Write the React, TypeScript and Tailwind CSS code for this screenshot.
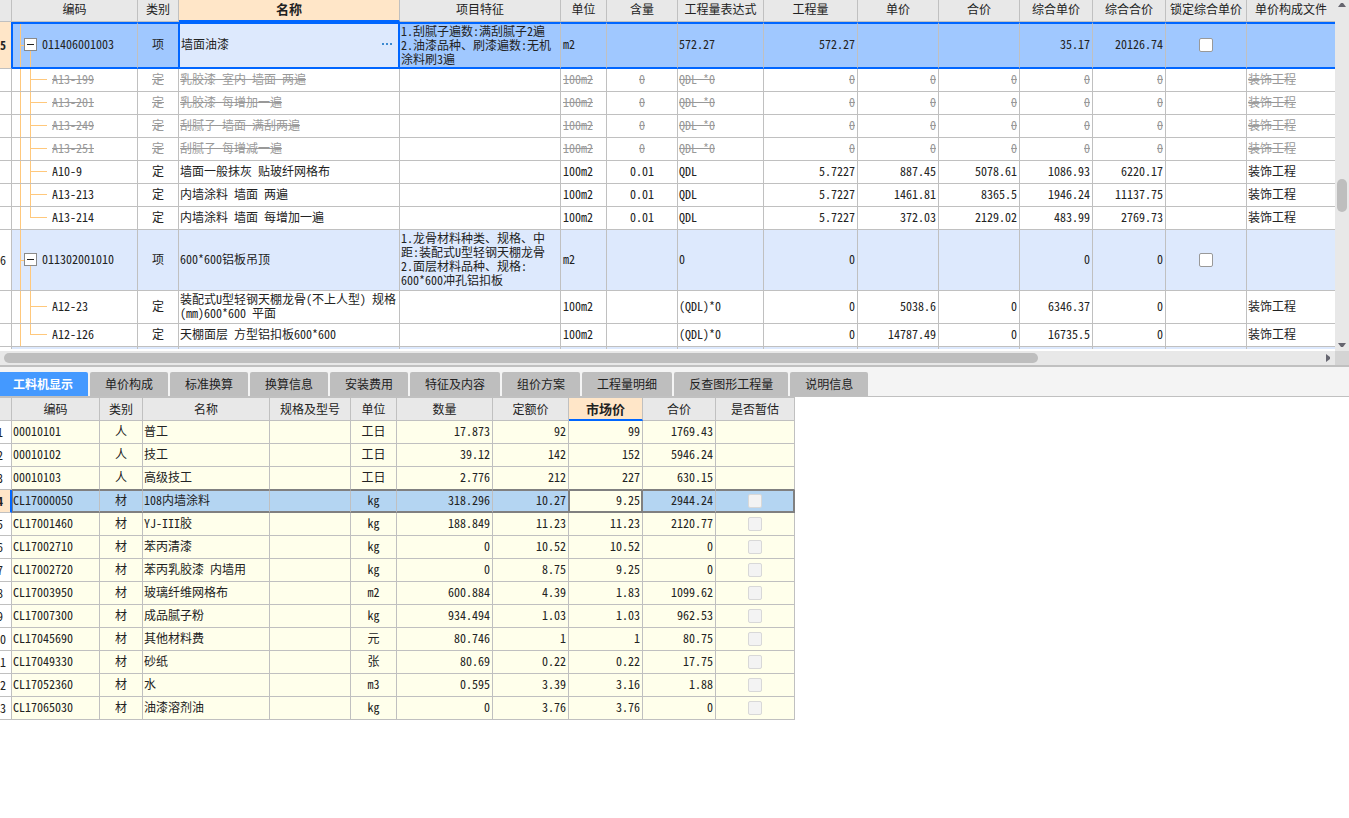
import clsx from "clsx";

type BillRow = {
    no?: string;
    code: string;
    kind: "项" | "定";
    name: string;
    feature?: string;
    unit: string;
    content?: string;
    expr: string;
    qty: string;
    price?: string;
    total?: string;
    fullPrice: string;
    fullTotal: string;
    file?: string;
    height: string;
    selected?: boolean;
    voided?: boolean;
    last?: boolean;
};

const voidedRow = (code: string, name: string): BillRow => ({
    code,
    kind: "定",
    name,
    unit: "100m2",
    content: "0",
    expr: "QDL *0",
    qty: "0",
    price: "0",
    total: "0",
    fullPrice: "0",
    fullTotal: "0",
    file: "装饰工程",
    height: "h-[23px]",
    voided: true,
});

const billRows: BillRow[] = [
    {
        no: "5",
        code: "011406001003",
        kind: "项",
        name: "墙面油漆",
        feature: "1.刮腻子遍数:满刮腻子2遍\n2.油漆品种、刷漆遍数:无机\n涂料刷3遍",
        unit: "m2",
        expr: "572.27",
        qty: "572.27",
        fullPrice: "35.17",
        fullTotal: "20126.74",
        height: "h-[47px]",
        selected: true,
    },
    voidedRow("A13-199", "乳胶漆 室内 墙面 两遍"),
    voidedRow("A13-201", "乳胶漆 每增加一遍"),
    voidedRow("A13-249", "刮腻子 墙面 满刮两遍"),
    voidedRow("A13-251", "刮腻子 每增减一遍"),
    {
        code: "A10-9",
        kind: "定",
        name: "墙面一般抹灰 贴玻纤网格布",
        unit: "100m2",
        content: "0.01",
        expr: "QDL",
        qty: "5.7227",
        price: "887.45",
        total: "5078.61",
        fullPrice: "1086.93",
        fullTotal: "6220.17",
        file: "装饰工程",
        height: "h-[23px]",
    },
    {
        code: "A13-213",
        kind: "定",
        name: "内墙涂料 墙面 两遍",
        unit: "100m2",
        content: "0.01",
        expr: "QDL",
        qty: "5.7227",
        price: "1461.81",
        total: "8365.5",
        fullPrice: "1946.24",
        fullTotal: "11137.75",
        file: "装饰工程",
        height: "h-[23px]",
    },
    {
        code: "A13-214",
        kind: "定",
        name: "内墙涂料 墙面 每增加一遍",
        unit: "100m2",
        content: "0.01",
        expr: "QDL",
        qty: "5.7227",
        price: "372.03",
        total: "2129.02",
        fullPrice: "483.99",
        fullTotal: "2769.73",
        file: "装饰工程",
        height: "h-[23px]",
        last: true,
    },
    {
        no: "6",
        code: "011302001010",
        kind: "项",
        name: "600*600铝板吊顶",
        feature: "1.龙骨材料种类、规格、中\n距:装配式U型轻钢天棚龙骨\n2.面层材料品种、规格:\n600*600冲孔铝扣板",
        unit: "m2",
        expr: "0",
        qty: "0",
        fullPrice: "0",
        fullTotal: "0",
        height: "h-[61px]",
    },
    {
        code: "A12-23",
        kind: "定",
        name: "装配式U型轻钢天棚龙骨(不上人型) 规格\n(mm)600*600 平面",
        unit: "100m2",
        expr: "(QDL)*0",
        qty: "0",
        price: "5038.6",
        total: "0",
        fullPrice: "6346.37",
        fullTotal: "0",
        file: "装饰工程",
        height: "h-[33px]",
    },
    {
        code: "A12-126",
        kind: "定",
        name: "天棚面层 方型铝扣板600*600",
        unit: "100m2",
        expr: "(QDL)*0",
        qty: "0",
        price: "14787.49",
        total: "0",
        fullPrice: "16735.5",
        fullTotal: "0",
        file: "装饰工程",
        height: "h-[23px]",
        last: true,
    },
];

const billHeads = [
    "编码",
    "类别",
    "名称",
    "项目特征",
    "单位",
    "含量",
    "工程量表达式",
    "工程量",
    "单价",
    "合价",
    "综合单价",
    "综合合价",
    "锁定综合单价",
    "单价构成文件",
];

const tabs = [
    "工料机显示",
    "单价构成",
    "标准换算",
    "换算信息",
    "安装费用",
    "特征及内容",
    "组价方案",
    "工程量明细",
    "反查图形工程量",
    "说明信息",
];

const resourceHeads = ["编码", "类别", "名称", "规格及型号", "单位", "数量", "定额价", "市场价", "合价", "是否暂估"];

// code, kind, name, unit, quantity, quota price, market price, total
const resources = [
    ["00010101", "人", "普工", "工日", "17.873", "92", "99", "1769.43"],
    ["00010102", "人", "技工", "工日", "39.12", "142", "152", "5946.24"],
    ["00010103", "人", "高级技工", "工日", "2.776", "212", "227", "630.15"],
    ["CL17000050", "材", "108内墙涂料", "kg", "318.296", "10.27", "9.25", "2944.24"],
    ["CL17001460", "材", "YJ-III胶", "kg", "188.849", "11.23", "11.23", "2120.77"],
    ["CL17002710", "材", "苯丙清漆", "kg", "0", "10.52", "10.52", "0"],
    ["CL17002720", "材", "苯丙乳胶漆 内墙用", "kg", "0", "8.75", "9.25", "0"],
    ["CL17003950", "材", "玻璃纤维网格布", "m2", "600.884", "4.39", "1.83", "1099.62"],
    ["CL17007300", "材", "成品腻子粉", "kg", "934.494", "1.03", "1.03", "962.53"],
    ["CL17045690", "材", "其他材料费", "元", "80.746", "1", "1", "80.75"],
    ["CL17049330", "材", "砂纸", "张", "80.69", "0.22", "0.22", "17.75"],
    ["CL17052360", "材", "水", "m3", "0.595", "3.39", "3.16", "1.88"],
    ["CL17065030", "材", "油漆溶剂油", "kg", "0", "3.76", "3.76", "0"],
];

function TreeCell({ row }: { row: BillRow }) {
    return (
        <div className={clsx("flex h-full items-stretch", row.selected ? "pl-[7px]" : "pl-2")}>
            <span className="w-px bg-[#ffc87c]" />
            {row.kind === "项" ? (
                <>
                    <span className="h-px w-[3px] self-center bg-[#ffc87c]" />
                    <span className="flex w-[13px] flex-col items-center">
                        <span className="grow basis-0" />
                        <button
                            type="button"
                            aria-label="折叠"
                            className="flex size-[13px] items-center justify-center border border-[#8a8a8a] bg-white"
                        >
                            <span className="h-px w-[7px] bg-[#222]" />
                        </button>
                        <span className="w-px grow basis-0.5 bg-[#ffc87c]" />
                    </span>
                    <span className={clsx("self-center pl-[5px]", row.selected ? "pb-1" : "pb-0.5")}>{row.code}</span>
                </>
            ) : (
                <>
                    <span className="ml-[9px] flex w-[17px] flex-col">
                        <span className="h-1/2 border-b border-l border-[#ffc87c]" />
                        <span className={clsx("h-1/2", !row.last && "border-l border-[#ffc87c]")} />
                    </span>
                    <span className={clsx("self-center pb-0.5 pl-[5px]", row.voided && "line-through")}>
                        {row.code}
                    </span>
                </>
            )}
        </div>
    );
}

function BillTable() {
    return (
        <table className="w-full table-fixed border-separate border-spacing-0">
            <colgroup>
                <col className="w-[12px]" />
                <col className="w-[126px]" />
                <col className="w-[41px]" />
                <col className="w-[221px]" />
                <col className="w-[161px]" />
                <col className="w-[46px]" />
                <col className="w-[71px]" />
                <col className="w-[86px]" />
                <col className="w-[94px]" />
                <col className="w-[81px]" />
                <col className="w-[81px]" />
                <col className="w-[73px]" />
                <col className="w-[73px]" />
                <col className="w-[81px]" />
                <col />
            </colgroup>
            <thead>
                <tr className="h-[22px] bg-[#e8e8e8]">
                    <td className="border-r border-b border-[#c0c0c0] p-0" />
                    {billHeads.map((head) => (
                        <th
                            key={head}
                            className={clsx(
                                "p-0 last:border-r-0",
                                head === "名称"
                                    ? "border-r border-b-2 border-r-[#c0c0c0] border-b-[#0066ff] bg-[#ffe6c8] pb-0.5 text-[13px] font-bold"
                                    : "border-r border-b border-[#c0c0c0] pb-[3px] font-normal",
                            )}
                        >
                            {head}
                        </th>
                    ))}
                </tr>
            </thead>
            <tbody>
                {billRows.map((row) => {
                    const frame = clsx(
                        "border-r border-r-[#c0c0c0] p-0 whitespace-pre last:border-r-0",
                        row.selected ? "border-y-2 border-y-[#0066ff]" : "border-b border-b-[#c0c0c0]",
                        row.voided && "text-[#999]",
                    );
                    const cell = clsx(
                        frame,
                        row.selected ? "pb-[3px]" : "pb-0.5",
                        row.voided && "line-through",
                    );
                    const num = clsx(cell, "pr-0.5 text-right");
                    return (
                        <tr
                            key={row.code}
                            className={clsx(
                                row.height,
                                row.selected ? "bg-[#a0c8ff]" : row.kind === "项" ? "bg-[#dde9fd]" : "bg-white",
                            )}
                        >
                            <td
                                className={clsx(
                                    "overflow-hidden border-r border-b border-b-[#c0c0c0] p-0",
                                    row.selected
                                        ? "border-r-[#0066ff] bg-[#ffe6c8] font-bold"
                                        : "border-r-[#c0c0c0] bg-white",
                                )}
                            >
                                {row.no}
                            </td>
                            <td className={clsx(frame, row.height, row.selected && "border-l border-l-[#0066ff]")}>
                                <TreeCell row={row} />
                            </td>
                            {row.selected ? (
                                <>
                                    <td className="border-y-2 border-r border-[#0066ff] p-0 pb-[3px] text-center">
                                        {row.kind}
                                    </td>
                                    <td className="border-y-2 border-r-2 border-l border-[#0066ff] bg-[#dde9fd] p-0 pr-1.5 pb-[3px] pl-px">
                                        <div className="flex items-center justify-between">
                                            {row.name}
                                            <button type="button" aria-label="更多" className="flex gap-0.5">
                                                <span className="size-0.5 bg-[#3d8ad0]" />
                                                <span className="size-0.5 bg-[#3d8ad0]" />
                                                <span className="size-0.5 bg-[#3d8ad0]" />
                                            </button>
                                        </div>
                                    </td>
                                    <td className={clsx(frame, "pl-px align-top")}>{row.feature}</td>
                                </>
                            ) : (
                                <>
                                    <td className={clsx(cell, "text-center")}>{row.kind}</td>
                                    <td className={clsx(cell, "pl-px")}>{row.name}</td>
                                    <td className={clsx(cell, "pl-px")}>{row.feature}</td>
                                </>
                            )}
                            <td className={clsx(cell, "pl-0.5")}>{row.unit}</td>
                            <td className={clsx(cell, "text-center")}>{row.content}</td>
                            <td className={clsx(cell, "pl-px")}>{row.expr}</td>
                            <td className={num}>{row.qty}</td>
                            <td className={num}>{row.price}</td>
                            <td className={num}>{row.total}</td>
                            <td className={num}>{row.fullPrice}</td>
                            <td className={num}>{row.fullTotal}</td>
                            <td className={clsx(frame, "pb-px")}>
                                {row.kind === "项" && (
                                    <input
                                        type="checkbox"
                                        aria-label={`锁定综合单价 ${row.code}`}
                                        className="mx-auto block size-3.5 appearance-none rounded-xs border border-[#999] bg-white"
                                    />
                                )}
                            </td>
                            <td className={clsx(cell, "pl-px")}>{row.file}</td>
                        </tr>
                    );
                })}
                {/* top edge of the next item, cut by the viewport */}
                <tr className="h-0.5 bg-[#dde9fd]">
                    {["", ...billHeads].map((head) => (
                        <td
                            key={head}
                            className="h-0.5 border-r border-[#c0c0c0] p-0 first:bg-white last:border-r-0"
                        />
                    ))}
                </tr>
            </tbody>
        </table>
    );
}

function ResourceTable() {
    return (
        <table className="w-[795px] table-fixed border-separate border-spacing-0">
            <colgroup>
                <col className="w-[12px]" />
                <col className="w-[88px]" />
                <col className="w-[43px]" />
                <col className="w-[127px]" />
                <col className="w-[81px]" />
                <col className="w-[46px]" />
                <col className="w-[96px]" />
                <col className="w-[76px]" />
                <col className="w-[74px]" />
                <col className="w-[73px]" />
                <col className="w-[79px]" />
            </colgroup>
            <thead>
                <tr className="h-6 bg-[#e8e8e8]">
                    <td className="border-y border-r border-[#c0c0c0] p-0" />
                    {resourceHeads.map((head) => (
                        <th
                            key={head}
                            className={clsx(
                                "border-t border-r border-t-[#c0c0c0] border-r-[#c0c0c0] p-0",
                                head === "市场价"
                                    ? "border-b-2 border-b-[#0066ff] bg-[#ffe6c8] text-[13px] font-bold"
                                    : "border-b border-b-[#c0c0c0] font-normal",
                            )}
                        >
                            {head}
                        </th>
                    ))}
                </tr>
            </thead>
            <tbody>
                {resources.map(([code, kind, name, unit, qty, quota, market, total], i) => {
                    const selected = i === 3;
                    const beforeSelected = i === 2;
                    const edge = clsx(
                        selected && "border-t border-b-2 border-y-[#808080]",
                        beforeSelected && "border-b border-b-[#808080]",
                        !selected && !beforeSelected && "border-b border-b-[#c0c0c0]",
                    );
                    const cell = clsx(edge, "border-r border-r-[#c0c0c0] p-0 pb-[3px]");
                    const num = clsx(cell, "pr-0.5 text-right");
                    return (
                        <tr key={code} className={clsx("h-[23px]", selected ? "bg-[#b4d5f2]" : "bg-[#ffffeb]")}>
                            <td
                                className={clsx(
                                    "overflow-hidden border-b border-b-[#c0c0c0] p-0",
                                    selected
                                        ? "border-r-2 border-r-[#0066ff] bg-[#ffe6c8] font-bold"
                                        : "border-r border-r-[#c0c0c0] bg-white",
                                )}
                            >
                                {/* the number column is scrolled half out of view */}
                                <div className="-ml-3 w-6 text-center">{i + 1}</div>
                            </td>
                            <td className={clsx(cell, selected ? "border-l border-l-[#808080]" : "pl-px")}>{code}</td>
                            <td className={clsx(cell, "text-center")}>{kind}</td>
                            <td className={clsx(cell, "pl-px")}>{name}</td>
                            <td className={cell} />
                            <td className={clsx(cell, "text-center")}>{unit}</td>
                            <td className={num}>{qty}</td>
                            {selected ? (
                                <>
                                    <td className="border-t border-r border-b-2 border-[#808080] p-0 pr-0.5 pb-[3px] text-right">
                                        {quota}
                                    </td>
                                    <td className="border-t border-r-2 border-b-2 border-l border-[#808080] bg-[#ffffeb] p-0 pr-px pb-[3px] text-right">
                                        {market}
                                    </td>
                                </>
                            ) : (
                                <>
                                    <td className={num}>{quota}</td>
                                    <td className={num}>{market}</td>
                                </>
                            )}
                            <td className={num}>{total}</td>
                            <td
                                className={clsx(
                                    edge,
                                    "p-0 pb-px",
                                    selected ? "border-r-2 border-r-[#808080]" : "border-r border-r-[#c0c0c0]",
                                )}
                            >
                                {kind === "材" && (
                                    <input
                                        type="checkbox"
                                        disabled
                                        aria-label={`是否暂估 ${code}`}
                                        className="mx-auto block size-3.5 appearance-none rounded-xs border border-[#d8d8d8] bg-[#f3f3f3]"
                                    />
                                )}
                            </td>
                        </tr>
                    );
                })}
            </tbody>
        </table>
    );
}

export default function App() {
    return (
        <div className="min-h-screen overflow-hidden bg-white font-['Noto_Sans_CJK_SC',sans-serif] text-[12px] leading-[14px] text-[#222] [font-feature-settings:'hwid']">
            <div className="flex">
                <div className="min-w-0 flex-1 overflow-hidden pb-0.5">
                    <BillTable />
                </div>
                <div className="flex w-3.5 flex-col items-center bg-[#e8e8e8] pt-[3px] pb-1">
                    <svg className="h-1 w-2" viewBox="0 0 8 4">
                        <path d="M0 4 3 0H5L8 4Z" fill="#666670" />
                    </svg>
                    <div className="mt-[172px] h-[33px] w-2.5 rounded-full bg-[#bebebe]" />
                    <svg className="mt-auto h-1 w-2" viewBox="0 0 8 4">
                        <path d="M0 0 3 4H5L8 0Z" fill="#666670" />
                    </svg>
                </div>
            </div>
            <div className="flex h-3.5 bg-[#e8e8e8]">
                <div className="flex flex-1 items-center justify-between pr-[5px] pl-1">
                    <div className="h-2.5 w-[78%] rounded-full bg-[#bebebe]" />
                    <svg className="h-2 w-1" viewBox="0 0 4 8">
                        <path d="M0 0 4 3V5L0 8Z" fill="#666670" />
                    </svg>
                </div>
                <div className="w-3.5 bg-[#d4d4d4]" />
            </div>
            <div role="tablist" className="flex gap-0.5 border-t-2 border-b border-[#c0c0c0] bg-[#f4f4f4] pt-[5px]">
                {tabs.map((tab, i) => (
                    <button
                        key={tab}
                        type="button"
                        role="tab"
                        aria-selected={i === 0}
                        className={clsx(
                            "h-6",
                            i === 0
                                ? "rounded-tr-xs bg-[#4499ff] pr-[15px] pl-[13px] font-bold text-white"
                                : "rounded-t-xs bg-[#bebebe] px-[15px]",
                        )}
                    >
                        {tab}
                    </button>
                ))}
            </div>
            <ResourceTable />
        </div>
    );
}
